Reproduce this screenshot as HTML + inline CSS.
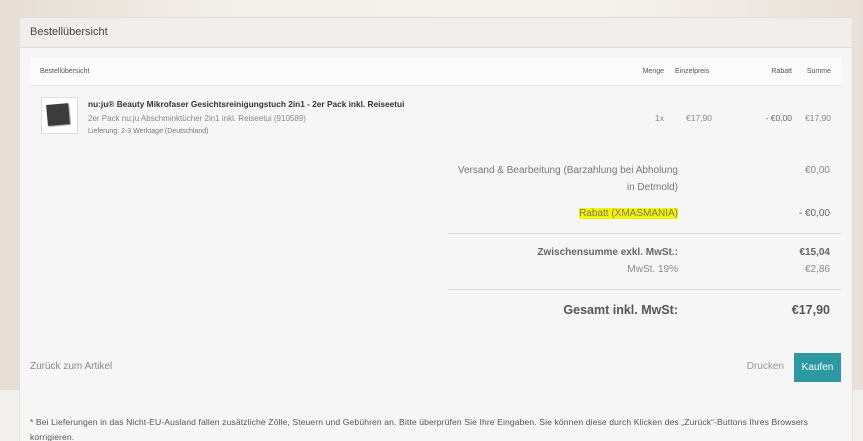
<!DOCTYPE html>
<html><head><meta charset="utf-8"><style>
html,body{margin:0;width:863px;height:441px;overflow:hidden}
body{font-family:"Liberation Sans",sans-serif;background:linear-gradient(90deg,#e6ded5 0%,#f4f1ec 30%,#f5f2ee 70%,#e9e1d9 100%);position:relative}
.bot{position:absolute;left:0;top:390px;width:863px;height:51px;background:#f2f0ed}
.p{position:absolute;left:19px;top:17px;width:832px;height:423px;background:#f6f6f6;border:1px solid #e2dfdb;border-bottom:none}
.hd{position:absolute;left:0;top:0;width:832px;height:29px;background:#f1efec;border-bottom:1px solid #dedbd7}
.t{position:absolute;white-space:nowrap;color:#666}
.r{text-align:right}
</style></head><body>
<div class="bot"></div>
<div class="p">
<div class="hd"></div>
<div class="t" style="left:10px;top:8px;font-size:11px;color:#444">Bestellübersicht</div>
<div style="position:absolute;left:11px;top:40px;width:810px;height:27px;background:#fbfbfb;border-bottom:1px solid #e2e2e2"></div>
<div class="t" style="left:20px;top:50px;font-size:7px;color:#555">Bestellübersicht</div>
<div class="t r" style="right:188px;top:50px;font-size:7px;color:#555">Menge</div>
<div class="t" style="left:655px;top:50px;font-size:7px;color:#555">Einzelpreis</div>
<div class="t r" style="right:60px;top:50px;font-size:7px;color:#555">Rabatt</div>
<div class="t r" style="right:21px;top:50px;font-size:7px;color:#555">Summe</div>
<div style="position:absolute;left:21px;top:79px;width:35px;height:35px;background:#fff;border:1px solid #ddd"></div>
<div style="position:absolute;left:27px;top:86px;width:22px;height:21px;background:#3c3c3c;transform:rotate(-5deg);box-shadow:1px 1px 1px #999"></div>
<div class="t" style="left:68px;top:81px;font-size:8.3px;color:#333;font-weight:bold">nu:ju® Beauty Mikrofaser Gesichtsreinigungstuch 2in1 - 2er Pack inkl. Reiseetui</div>
<div class="t" style="left:68px;top:96px;font-size:8px;color:#888">2er Pack nu:ju Abschminktücher 2in1 inkl. Reiseetui (910589)</div>
<div class="t" style="left:68px;top:110px;font-size:7px;color:#777">Lieferung: 2-3 Werktage (Deutschland)</div>
<div class="t r" style="right:188px;top:95px;font-size:8.5px;color:#888">1x</div>
<div class="t r" style="right:140px;top:95px;font-size:8.5px;color:#888">€17,90</div>
<div class="t r" style="right:60px;top:95px;font-size:8.5px;color:#666">- €0,00</div>
<div class="t r" style="right:21px;top:95px;font-size:8.5px;color:#888">€17,90</div>
<div class="t r" style="right:174px;top:144px;font-size:10px;line-height:17px;color:#777">Versand &amp; Bearbeitung (Barzahlung bei Abholung<br>in Detmold)</div>
<div class="t r" style="right:22px;top:144px;font-size:10px;line-height:17px;color:#888">€0,00</div>
<div class="t r" style="right:174px;top:190px;font-size:10px;color:#777;background:#f5f500">Rabatt (XMASMANIA)</div>
<div class="t r" style="right:22px;top:190px;font-size:10px;color:#666">- €0,00</div>
<div style="position:absolute;left:428px;top:215px;width:393px;height:1px;background:#ddd"></div>
<div class="t r" style="right:174px;top:229px;font-size:10px;color:#666;font-weight:bold">Zwischensumme exkl. MwSt.:</div>
<div class="t r" style="right:22px;top:229px;font-size:10px;color:#666;font-weight:bold">€15,04</div>
<div class="t r" style="right:174px;top:246px;font-size:10px;color:#888">MwSt. 19%</div>
<div class="t r" style="right:22px;top:246px;font-size:10px;color:#888">€2,86</div>
<div style="position:absolute;left:428px;top:271px;width:393px;height:1px;background:#ddd"></div>
<div class="t r" style="right:174px;top:285px;font-size:12.5px;color:#555;font-weight:bold">Gesamt inkl. MwSt:</div>
<div class="t r" style="right:22px;top:285px;font-size:12.5px;color:#555;font-weight:bold">€17,90</div>
<div class="t" style="left:10px;top:343px;font-size:10px;color:#888">Zurück zum Artikel</div>
<div class="t r" style="right:68px;top:343px;font-size:10px;color:#999">Drucken</div>
<div style="position:absolute;left:774px;top:335px;width:47px;height:29px;background:#2b98a2;color:#fff;font-size:10px;text-align:center;line-height:29px">Kaufen</div>
<div class="t" style="left:10px;top:397px;font-size:8.6px;letter-spacing:0.1px;line-height:15px;color:#555;white-space:normal;width:815px">* Bei Lieferungen in das Nicht-EU-Ausland fallen zusätzliche Zölle, Steuern und Gebühren an. Bitte überprüfen Sie Ihre Eingaben. Sie können diese durch Klicken des „Zurück“-Buttons Ihres Browsers korrigieren.</div>
</div>
</body></html>
